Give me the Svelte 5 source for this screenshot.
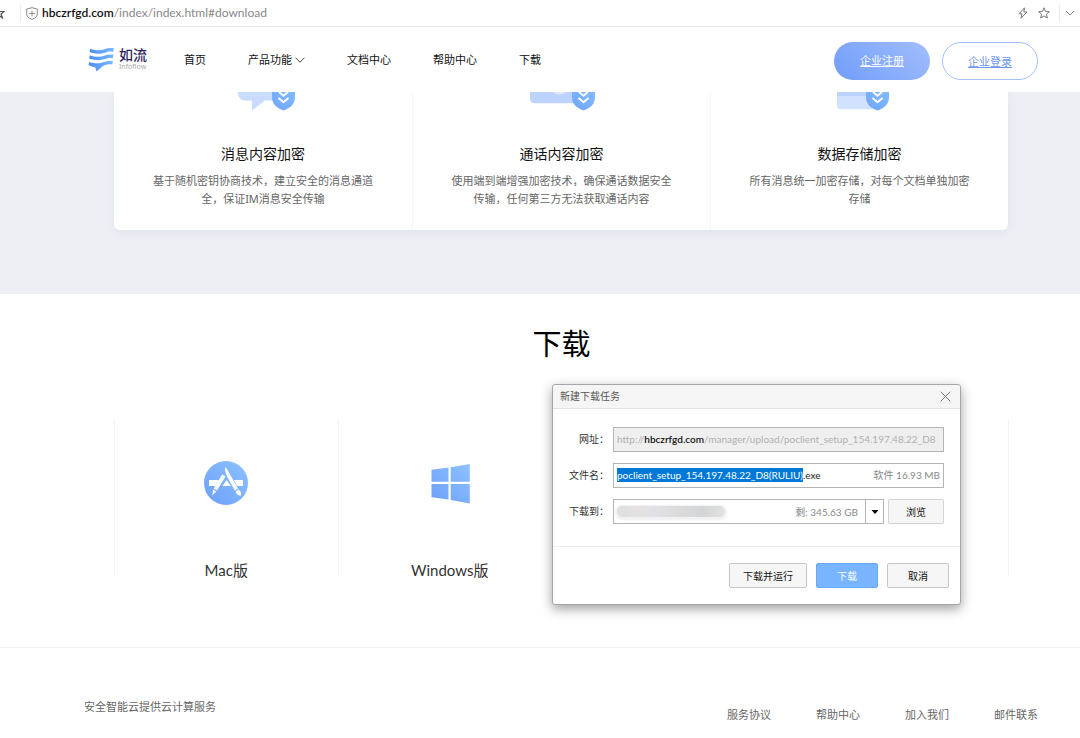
<script>
  import { onMount } from 'svelte';

  let fileInput;
  let fileName = 'poclient_setup_154.197.48.22_D8(RULIU).exe';

  const nav = [
    { label: '首页' },
    { label: '产品功能', menu: true },
    { label: '文档中心' },
    { label: '帮助中心' },
    { label: '下载' }
  ];

  const features = [
    { icon: 'message', title: '消息内容加密', text: '基于随机密钥协商技术，建立安全的消息通道全，保证IM消息安全传输', shield: 42 },
    { icon: 'call', title: '通话内容加密', text: '使用端到端增强加密技术，确保通话数据安全传输，任何第三方无法获取通话内容', shield: 43 },
    { icon: 'storage', title: '数据存储加密', text: '所有消息统一加密存储，对每个文档单独加密存储', shield: 39 }
  ];

  const footerLinks = ['服务协议', '帮助中心', '加入我们', '邮件联系'];

  // The name is preselected without its extension, ready to be retyped.
  onMount(() => {
    fileInput.focus();
    fileInput.setSelectionRange(0, fileName.lastIndexOf('.'));
  });
</script>

<div class="page">
  <div class="addressbar">
    <svg class="edge-star" width="5" height="12" viewBox="0 0 5 12" fill="none" stroke="#555" stroke-width="1.2"><path d="M-3 4.500H4L1 7L2.500 11L-1 8.500" /></svg>
    <span class="rule left-rule"></span>
    <svg width="12" height="13" viewBox="0 0 12 13" fill="none" stroke="#8a8a8a"><path d="M6 .7L11.300 2V7.200C11.300 9.800 8.600 11.600 6 12.400C3.400 11.600 .7 9.800 .7 7.200V2Z" /><path d="M6 3.500V9.300M3.100 6.400H8.900" /></svg>
    <span class="address"><b>hbczrfgd.com</b>/index/index.html#download</span>
    <svg class="bolt" width="10" height="12" viewBox="0 0 10 12" fill="none" stroke="#777" stroke-linejoin="round"><path d="M6.500 .8L1 6.800H4L3 11.200L9 4.900H5.800Z" /></svg>
    <svg class="star" width="12" height="12" viewBox="0 0 12 12" fill="none" stroke="#777" stroke-linejoin="round"><path d="M6 .8L7.500 4.400L11.400 4.700L8.400 7.200L9.400 11L6 8.900L2.600 11L3.600 7.200L.6 4.700L4.500 4.400Z" /></svg>
    <span class="rule"></span>
    <svg class="more" width="10" height="6" viewBox="0 0 10 6" fill="none" stroke="#888"><path d="M1 1L5 5L9 1" /></svg>
  </div>

  <header>
    <a class="logo" href="#home">
      <svg width="27" height="25" viewBox="0 0 27 25">
        <defs><linearGradient id="brand" x1="0" y1="0" x2="1" y2="0"><stop offset="0" stop-color="#4b8df8" /><stop offset="1" stop-color="#79b8ff" /></linearGradient></defs>
        <g fill="url(#brand)">
          <path d="M2.200 1.800C8 4 13 3.600 17 2C20 .9 23 .8 26 1.300L25.200 4.900C22 4 20 4.600 17 5.700C12 7.300 7 7 1.500 5Z" />
          <path d="M1.800 8.300C8 10.500 13 10 17 8.400C20 7.300 23 7.200 25.500 7.700L24.700 11.300C22 10.500 20 11 17 12.100C12 13.700 7 13.500 1.100 11.500Z" />
          <path d="M1.200 14.900C8 17 12 16.600 16 15C19 13.800 22 13.600 25 14.300L24.200 17.600C20 16.800 18 17.600 15 19L8.500 24.400L7.300 20.400C5 20.100 2.800 19.400 .5 18.300Z" />
        </g>
      </svg>
      <span class="wordmark"><strong>如流</strong><small>Infoflow</small></span>
    </a>
    <nav>
      {#each nav as item}
        <a href="#{item.label}">{item.label}{#if item.menu}<svg width="10" height="6" viewBox="0 0 10 6" fill="none" stroke="#444"><path d="M.5 .7L5 5.200L9.500 .7" /></svg>{/if}</a>
      {/each}
    </nav>
    <div class="account">
      <a class="pill filled" href="#register">企业注册</a>
      <a class="pill" href="#login">企业登录</a>
    </div>
  </header>

  <section class="security">
    <div class="cards">
      {#each features as f}
        <article>
          <svg width="66" height="19" viewBox="0 0 66 19">
            <defs><linearGradient id="tint-{f.icon}" x1="0" y1="1" x2="1" y2="0"><stop offset="0" stop-color="#6fa4fb" /><stop offset="1" stop-color="#82bbff" /></linearGradient></defs>
            {#if f.icon === 'message'}
              <path d="M7.700 0H50V8.500H35L22 18.500V8.500H15C11 8.500 8 5 7.700 0Z" fill="#c9dcfe" />
            {:else if f.icon === 'call'}
              <path d="M1 0H56V11.300H6C3 11.300 1 9.500 1 7Z" fill="#bdd2fd" />
              <path d="M24 0H37C34.500 3.200 26.500 3.200 24 0Z" fill="#dfeafe" />
            {:else}
              <path d="M10 0H55V17.300H14C11.500 17.300 10 16 10 13.500Z" fill="#d1e1fe" />
              <path d="M10 0H55V4H10Z" fill="#bdd2fd" />
            {/if}
            <g transform="translate({f.shield} 0)">
              <path d="M0 0H23V5C23 12 18.500 16 11.500 18.500C4.500 16 0 12 0 5Z" fill="url(#tint-{f.icon})" />
              <path d="M7 0L11.500 3.800L16 0M6.500 6L11.500 10.300L16.500 6" fill="none" stroke="#fff" stroke-width="2" />
            </g>
          </svg>
          <h3>{f.title}</h3>
          <p>{f.text}</p>
        </article>
      {/each}
    </div>
  </section>

  <section class="download" id="download">
    <h2>下载</h2>
    <div class="platforms">
      <a href="#mac">
        <svg width="44" height="44" viewBox="0 0 44 44">
          <defs><linearGradient id="sky" x1="0" y1="1" x2="1" y2="0"><stop offset="0" stop-color="#6c9ff9" /><stop offset="1" stop-color="#8ec2ff" /></linearGradient></defs>
          <circle cx="22" cy="22" r="22" fill="url(#sky)" />
          <path d="M5 19H15L11.500 25H5ZM30 19H39V25H33ZM22.500 19L27 25H18.500Z" fill="#fff" />
          <path d="M18.200 13.500L21.500 15.500L13 29.500L9.700 27.500ZM9 28.500L12.300 30.500L8.300 34.500Z" fill="#fff" />
          <path d="M21 6C23 8 25 11 26 13.500L34 27.500L30.800 29.500L22.800 15C21.500 12 20.800 9 21 6ZM31.500 30.400L34.700 28.500L36.500 30.500C37.500 32 37 34 36.700 34.800C35 34.500 33.500 34 32.500 32.500Z" fill="#fff" />
        </svg>
        <span>Mac版</span>
      </a>
      <a href="#windows">
        <svg width="44" height="44" viewBox="0 0 44 44" fill="url(#sky)"><path d="M3.500 8.800L20.500 6.500V20.800H3.500ZM22.700 6.200L41.800 3V20.800H22.700ZM3.500 23H20.500V38.500L3.500 36.200ZM22.700 23H41.800V42.500L22.700 39Z" /></svg>
        <span>Windows版</span>
      </a>
      <div></div>
      <div></div>
    </div>

    <div class="dialog" role="dialog" aria-labelledby="dialog-title">
      <div class="titlebar">
        <span id="dialog-title">新建下载任务</span>
        <button class="close" aria-label="关闭"><svg width="11" height="11" viewBox="0 0 11 11" stroke="#777"><path d="M.7 .7L10.300 10.300M10.300 .7L.7 10.300" /></svg></button>
      </div>
      <form onsubmit={(e) => e.preventDefault()}>
        <span class="label" id="url-label">网址：</span>
        <div class="field readonly" role="textbox" tabindex="0" aria-readonly="true" aria-labelledby="url-label">
          <span class="url">http://<b>hbczrfgd.com</b>/manager/upload/poclient_setup_154.197.48.22_D8</span>
        </div>
        <label class="label" for="file-name">文件名：</label>
        <div class="field">
          <input id="file-name" type="text" spellcheck="false" autocomplete="off" bind:this={fileInput} bind:value={fileName} />
          <span class="note">软件 16.93 MB</span>
        </div>
        <label class="label" for="folder">下载到：</label>
        <div class="folder-row">
          <div class="field combo">
            <span class="smudge"></span>
            <input id="folder" type="text" />
            <span class="note">剩: 345.63 GB</span>
            <button class="drop" aria-label="选择文件夹"><svg width="8" height="4" viewBox="0 0 8 4"><path d="M.5 0H7.500L4 4Z" /></svg></button>
          </div>
          <button class="browse">浏览</button>
        </div>
      </form>
      <div class="actions">
        <button class="wide">下载并运行</button>
        <button class="primary">下载</button>
        <button>取消</button>
      </div>
    </div>
  </section>

  <footer>
    <p>安全智能云提供云计算服务</p>
    <div class="links">
      {#each footerLinks as link}<a href="#{link}">{link}</a>{/each}
    </div>
  </footer>
</div>

<style>
  :global(body) { margin: 0; background: #fff; }
  .page { font-family: "Noto Sans", "Noto Sans CJK SC", sans-serif; font-size: 11px; color: #222; overflow: hidden; }
  a { color: inherit; text-decoration: none; }
  h2, h3, p { margin: 0; font-weight: 400; }
  svg { display: block; flex: none; }

  .addressbar { display: flex; align-items: center; height: 26px; padding-right: 5px; border-bottom: 1px solid #e6e6e6; }
  .rule { width: 1px; height: 18px; background: #ececec; }
  .left-rule { margin: 0 5px 0 15px; }
  .address { flex: 1; margin-left: 4px; font-family: Lato, sans-serif; font-size: 12px; line-height: 16px; color: #888; }
  .address b { font-weight: 600; color: #111; }
  .bolt { margin-right: 10px; }
  .star { margin-right: 9px; }
  .more { margin-left: 5px; }

  header { display: flex; align-items: center; height: 65px; padding: 0 42px 0 88px; background: #fff; }
  .logo { display: flex; align-items: center; gap: 4px; width: 96px; }
  .wordmark { display: flex; flex-direction: column; }
  .wordmark strong { font-size: 14px; line-height: 14px; font-weight: 500; color: #2c2360; }
  .wordmark small { font-size: 7px; line-height: 10px; color: #a8a8a8; }
  nav { display: flex; flex: 1; gap: 42px; color: #111; }
  nav a { display: flex; align-items: center; gap: 3px; line-height: 16px; }
  .account { display: flex; gap: 12px; padding-top: 3px; }
  .pill { box-sizing: border-box; width: 96px; height: 38px; border: 1px solid #a2bffc; border-radius: 19px; line-height: 38px; text-align: center; color: #6c96f2; text-decoration: underline; }
  .pill.filled { border: 0; color: #fff; background: linear-gradient(45deg, #709dfa, #a2befc); }

  .security { padding: 0 72px 64px 114px; background: #eeeff5; }
  .cards { display: grid; grid-template-columns: repeat(3, 1fr); height: 138px; border-radius: 0 0 6px 6px; background: #fff; box-shadow: 0 2px 8px #dfe2ec; clip-path: inset(0 -12px -12px -12px); }
  article { display: flex; flex-direction: column; align-items: center; padding: 0 36px; text-align: center; }
  article + article { border-left: 1px solid #f6f6f9; }
  h3 { margin: 33px 0 8px; font-size: 14px; line-height: 20px; color: #111; }
  article p { line-height: 18px; color: #666; }

  .download { position: relative; padding: 30px 71px 70px 114px; }
  h2 { font-size: 29px; line-height: 40px; text-align: center; color: #000; }
  .platforms { display: grid; grid-template-columns: repeat(4, 1fr); margin-top: 56px; border-right: 1px solid #f3f3f3; }
  .platforms > * { display: flex; flex-direction: column; align-items: center; gap: 55px; height: 116px; padding-top: 41px; border-left: 1px solid #f3f3f3; font-family: Lato, "Noto Sans CJK SC", sans-serif; font-size: 15px; line-height: 20px; color: #333; }

  .dialog { position: absolute; top: 90px; left: calc(50% + 12px); width: 407px; border: 1px solid #a6a6a9; border-radius: 3px; background: #fff; box-shadow: 0 4px 12px rgba(0, 0, 0, .38); font-family: Lato, "Noto Sans CJK SC", sans-serif; font-size: 10px; line-height: 14px; color: #333; }
  .titlebar { display: flex; justify-content: space-between; align-items: center; height: 23px; padding: 0 9px 0 7px; border-bottom: 1px solid #e2e2e2; border-radius: 3px 3px 0 0; background: #f5f5f5; color: #555; }
  .titlebar span { padding-bottom: 2px; }
  .dialog button { box-sizing: border-box; height: 25px; padding: 0; border: 1px solid #c6c6c8; border-radius: 2px; background: #f6f6f6; font: inherit; color: #111; }
  .dialog .close { display: flex; align-items: center; height: 20px; border: 0; background: none; }
  form { display: grid; grid-template-columns: 49px minmax(0, 1fr); gap: 11px; padding: 18px 16px 22px 0; border-bottom: 1px solid #efefef; }
  .label { line-height: 25px; text-align: right; white-space: nowrap; margin-right: -7px; }
  .field { display: flex; align-items: center; box-sizing: border-box; min-width: 0; height: 25px; padding: 0 3px 2px; border: 1px solid #b4b4b6; background: #fff; }
  .readonly { background: #efefef; }
  .url { overflow: hidden; white-space: nowrap; color: #b0b0b0; }
  .url b { font-weight: 600; color: #111; }
  .field input { flex: 1; min-width: 0; padding: 0; border: 0; outline: 0; background: none; font: inherit; color: #222; }
  .field input::selection { background: #0078d7; color: #fff; }
  .note { white-space: nowrap; color: #888; }
  .folder-row { display: flex; gap: 4px; }
  .combo { flex: 1; padding: 0 0 0 3px; }
  .smudge { width: 108px; height: 11px; border-radius: 5px; background: linear-gradient(90deg, #dcdfe5, #e6e1df 20%, #e1e2e8 32%, #dadada 60%, #d3d5d7 80%, #e2e2e2); box-shadow: 0 1px 2px 2px #f1f1f1; }
  .dialog .drop { display: flex; align-items: center; justify-content: center; width: 18px; height: 23px; margin-left: 7px; border: 0; border-left: 1px solid #b4b4b6; border-radius: 0; background: #fff; }
  .dialog .browse { width: 56px; border-color: #d2d2d4; }
  .actions { display: flex; justify-content: flex-end; gap: 9px; padding: 16px 11px 16px; }
  .actions button { width: 62px; }
  .actions .wide { width: 78px; }
  .actions .primary { border-color: #6aaaf5; background: #78b4ff; color: #fff; }

  footer { display: flex; justify-content: space-between; align-items: flex-start; padding: 50px 42px 13px 84px; border-top: 1px solid #f0f0f0; line-height: 18px; color: #666; }
  .links { display: flex; gap: 45px; padding-top: 8px; }
</style>
